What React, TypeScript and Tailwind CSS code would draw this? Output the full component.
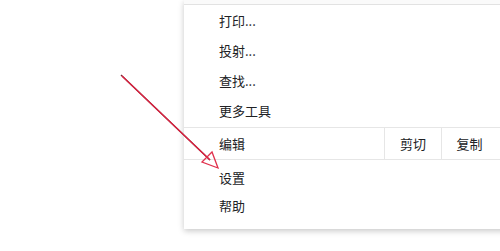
import React from "react";

const font = { fontFamily: '"Noto Sans CJK SC", "Noto Sans", sans-serif' };

function Item({ label, h = "h-[30px]" }: { label: string; h?: string }) {
  return (
    <div className={`flex items-center pl-[35px] ${h} text-[13px] text-[#202124]`}>{label}</div>
  );
}

export default function App() {
  return (
    <div className="relative w-[500px] h-[251px] bg-white overflow-hidden" style={font}>
      <div className="ml-[184px] w-[330px] h-[229px] bg-white shadow-[0_2px_6px_rgba(0,0,0,0.22)] flex flex-col">
        <div className="h-[4px] bg-[#fafafa]" />
        <div className="h-px bg-[#e2e2e2]" />
        <div className="h-[1px]" />
        <Item label="打印..." />
        <Item label="投射..." />
        <Item label="查找..." />
        <Item label="更多工具" />
        <div className="flex h-[33px] border-y border-[#e6e6e6] mt-[1px] text-[13px] text-[#202124]">
          <div className="flex-1 flex items-center pl-[35px]">编辑</div>
          <div className="w-[57px] flex items-center justify-center border-l border-[#e6e6e6]">剪切</div>
          <div className="w-[58px] flex items-center justify-center border-l border-[#e6e6e6] pr-[2px]">复制</div>
          <div className="w-[15px]" />
        </div>
        <div className="mt-[4px]" />
        <Item label="设置" h="h-[28px]" />
        <Item label="帮助" h="h-[28px]" />
      </div>
      <svg className="absolute left-0 top-0" width="500" height="251" viewBox="0 0 500 251">
        <line x1="121" y1="75" x2="210" y2="160" stroke="#7a2a35" strokeWidth="1.4" />
        <line x1="122" y1="76" x2="210" y2="160" stroke="#e02040" strokeWidth="1.1" />
        <polygon points="218,168 202,162 212,152" fill="none" stroke="#e0304c" strokeWidth="1.3" />
      </svg>
    </div>
  );
}
